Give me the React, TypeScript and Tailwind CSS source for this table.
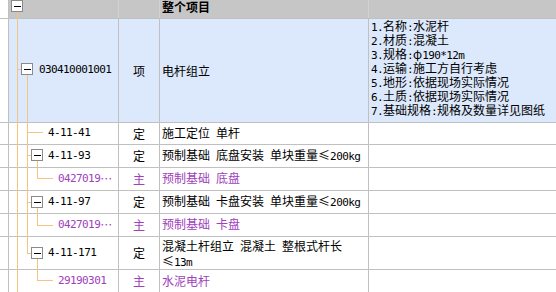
import React from "react";

const FONT = { fontFamily: '"Noto Sans CJK SC", "Liberation Sans", sans-serif' };

// Latin runs in a half-width mono font so digits take 6px like the original grid font
function T({ s }: { s: string }) {
  const parts = s.split(/([\x20-\x7e]+)/);
  return (
    <>
      {parts.map((p, i) =>
        /^[\x20-\x7e]+$/.test(p) ? (
          <span key={i} className="font-['DejaVu_Sans_Mono'] text-[11px] tracking-[-0.6px] whitespace-pre">
            {p}
          </span>
        ) : (
          <React.Fragment key={i}>{p}</React.Fragment>
        )
      )}
    </>
  );
}

type Row = {
  h: string;
  code: string;
  pad: string;
  kind: string;
  name: string[];
  feat?: string[];
  sub?: boolean;
  blue?: boolean;
};

const rows: Row[] = [
  {
    h: "h-[104px]",
    code: "030410001001",
    pad: "pl-[30px]",
    kind: "项",
    name: ["电杆组立"],
    blue: true,
    feat: [
      "1.名称:水泥杆",
      "2.材质:混凝土",
      "3.规格:φ190*12m",
      "4.运输:施工方自行考虑",
      "5.地形:依据现场实际情况",
      "6.土质:依据现场实际情况",
      "7.基础规格:规格及数量详见图纸",
    ],
  },
  { h: "h-[22px]", code: "4-11-41", pad: "pl-[39px]", kind: "定", name: ["施工定位 单杆"] },
  { h: "h-[23px]", code: "4-11-93", pad: "pl-[39px]", kind: "定", name: ["预制基础 底盘安装 单块重量≤200kg"] },
  { h: "h-[23px]", code: "0427019…", pad: "pl-[49px]", kind: "主", name: ["预制基础 底盘"], sub: true },
  { h: "h-[23px]", code: "4-11-97", pad: "pl-[39px]", kind: "定", name: ["预制基础 卡盘安装 单块重量≤200kg"] },
  { h: "h-[23px]", code: "0427019…", pad: "pl-[49px]", kind: "主", name: ["预制基础 卡盘"], sub: true },
  { h: "h-[33px]", code: "4-11-171", pad: "pl-[39px]", kind: "定", name: ["混凝土杆组立 混凝土 整根式杆长", "≤13m"] },
  { h: "h-[23px]", code: "29190301", pad: "pl-[49px]", kind: "主", name: ["水泥电杆"], sub: true },
];

function Toggle({ x, y }: { x: number; y: number }) {
  return (
    <g>
      <rect x={x + 0.5} y={y + 0.5} width={11} height={11} fill="#fff" stroke="#8a8a8a" />
      <line x1={x + 3} x2={x + 10} y1={y + 6.5} y2={y + 6.5} stroke="#000" />
    </g>
  );
}

function TreeLines() {
  const c = "#f7c47f";
  return (
    <svg className="absolute left-0 top-0 pointer-events-none" width={556} height={292}>
      <g stroke={c} strokeWidth={1}>
        <line x1={17.5} x2={17.5} y1={12} y2={292} />
        <line x1={17} x2={21} y1={69.5} y2={69.5} />
        <line x1={27.5} x2={27.5} y1={75} y2={253.5} />
        <line x1={27} x2={43} y1={132.5} y2={132.5} />
        <line x1={27} x2={31} y1={155.5} y2={155.5} />
        <line x1={37.5} x2={37.5} y1={161} y2={178.5} />
        <line x1={37} x2={53} y1={178.5} y2={178.5} />
        <line x1={27} x2={31} y1={202.5} y2={202.5} />
        <line x1={37.5} x2={37.5} y1={208} y2={225.5} />
        <line x1={37} x2={53} y1={225.5} y2={225.5} />
        <line x1={27} x2={31} y1={253.5} y2={253.5} />
        <line x1={37.5} x2={37.5} y1={259} y2={280.5} />
        <line x1={37} x2={53} y1={280.5} y2={280.5} />
      </g>
      <Toggle x={11} y={0} />
      <Toggle x={21} y={63} />
      <Toggle x={31} y={149} />
      <Toggle x={31} y={196} />
      <Toggle x={31} y={247} />
    </svg>
  );
}

export default function App() {
  return (
    <div className="relative w-[556px] h-[292px] overflow-hidden bg-white text-[12px] text-black" style={FONT}>
      <div className="flex h-[19px] border-b border-[#c0c0c0]">
        <div className="w-[9px] shrink-0 border-r border-[#c0c0c0] bg-white" />
        <div className="w-[110px] shrink-0 border-r border-[#d2d2d2] bg-[#c6c6c6]" />
        <div className="w-[41px] shrink-0 border-r border-[#d2d2d2] bg-[#c6c6c6]" />
        <div className="w-[209px] shrink-0 border-r border-[#d2d2d2] bg-[#c6c6c6] pl-[2px] leading-[14px] font-bold">
          整个项目
        </div>
        <div className="flex-1 bg-[#c6c6c6]" />
      </div>

      {rows.map((r, i) => {
        const bg = r.blue ? "bg-[#dce8fb]" : "bg-white";
        const color = r.sub ? "text-[#a040bc]" : "text-black";
        const tall = r.name.length > 1;
        return (
          <div key={i} className={`flex ${r.h} border-b border-[#c0c0c0] ${color}`}>
            <div className="w-[9px] shrink-0 border-r border-[#c0c0c0] bg-white" />
            <div className={`w-[110px] shrink-0 border-r border-[#c0c0c0] ${bg} ${r.pad} flex items-center whitespace-nowrap overflow-hidden`}>
              <T s={r.code} />
            </div>
            <div className={`w-[41px] shrink-0 border-r border-[#c0c0c0] ${bg} flex items-center justify-center`}>
              {r.kind}
            </div>
            <div
              className={`w-[209px] shrink-0 border-r border-[#c0c0c0] ${bg} pl-[2px] flex flex-col ${
                tall ? "justify-start pt-px" : "justify-center"
              }`}
            >
              {r.name.map((n) => (
                <div key={n} className={`whitespace-nowrap ${tall ? "h-[15px] leading-[15px]" : ""}`}>
                  <T s={n} />
                </div>
              ))}
            </div>
            <div className={`flex-1 ${bg} pl-[2px] leading-[14px]`}>
              {r.feat?.map((f) => (
                <div key={f} className="h-[14px] whitespace-nowrap">
                  <T s={f} />
                </div>
              ))}
            </div>
          </div>
        );
      })}

      <TreeLines />
    </div>
  );
}
